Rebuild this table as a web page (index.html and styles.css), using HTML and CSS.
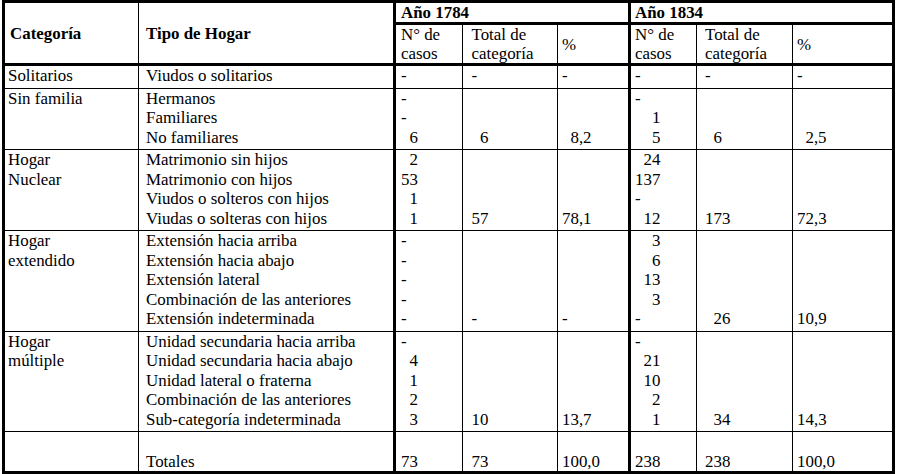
FILE: index.html
```html
<!DOCTYPE html>
<html lang="es">
<head>
<meta charset="utf-8">
<title>Tipos de hogar 1784 y 1834</title>
<link rel="stylesheet" href="styles.css">
</head>
<body>
<table class="hogares">
  <colgroup>
    <col class="c-cat"><col class="c-tipo">
    <col class="c-n"><col class="c-tot1"><col class="c-pct1">
    <col class="c-n2"><col class="c-tot2"><col class="c-pct2">
  </colgroup>
  <thead>
    <tr class="h1">
      <th rowspan="2" class="h-cat">Categoría</th>
      <th rowspan="2" class="h-tipo">Tipo de Hogar</th>
      <th colspan="3" class="h-year n1">Año 1784</th>
      <th colspan="3" class="h-year n2">Año 1834</th>
    </tr>
    <tr class="h2">
      <th class="n1">N° de<br>casos</th>
      <th class="t1">Total de<br>categoría</th>
      <th class="p1 mid">%</th>
      <th class="n2">N° de<br>casos</th>
      <th class="t2">Total de<br>categoría</th>
      <th class="p2 mid">%</th>
    </tr>
  </thead>
  <tbody>
    <tr class="first">
      <td class="cat">Solitarios</td>
      <td class="tipo">Viudos o solitarios</td>
      <td class="n1">-</td>
      <td class="t1">-</td>
      <td class="p1">-</td>
      <td class="n2">-</td>
      <td class="t2">-</td>
      <td class="p2">-</td>
    </tr>
    <tr>
      <td class="cat">Sin familia</td>
      <td class="tipo">Hermanos<br>Familiares<br>No familiares</td>
      <td class="n1">-<br>-<br><span class="f2">6</span></td>
      <td class="t1"><span class="f2">6</span></td>
      <td class="p1"><span class="f4">8,2</span></td>
      <td class="n2">-<br><span class="f3">1</span><br><span class="f3">5</span></td>
      <td class="t2"><span class="f2">6</span></td>
      <td class="p2"><span class="f4">2,5</span></td>
    </tr>
    <tr>
      <td class="cat">Hogar<br>Nuclear</td>
      <td class="tipo">Matrimonio sin hijos<br>Matrimonio con hijos<br>Viudos o solteros con hijos<br>Viudas o solteras con hijos</td>
      <td class="n1"><span class="f2">2</span><br><span class="f2">53</span><br><span class="f2">1</span><br><span class="f2">1</span></td>
      <td class="t1"><span class="f2">57</span></td>
      <td class="p1"><span class="f4">78,1</span></td>
      <td class="n2"><span class="f3">24</span><br><span class="f3">137</span><br>-<br><span class="f3">12</span></td>
      <td class="t2"><span class="f3">173</span></td>
      <td class="p2"><span class="f4">72,3</span></td>
    </tr>
    <tr>
      <td class="cat">Hogar<br>extendido</td>
      <td class="tipo">Extensión hacia arriba<br>Extensión hacia abajo<br>Extensión lateral<br>Combinación de las anteriores<br>Extensión indeterminada</td>
      <td class="n1">-<br>-<br>-<br>-<br>-</td>
      <td class="t1">-</td>
      <td class="p1">-</td>
      <td class="n2"><span class="f3">3</span><br><span class="f3">6</span><br><span class="f3">13</span><br><span class="f3">3</span><br>-</td>
      <td class="t2"><span class="f3">26</span></td>
      <td class="p2"><span class="f4">10,9</span></td>
    </tr>
    <tr>
      <td class="cat">Hogar<br>múltiple</td>
      <td class="tipo">Unidad secundaria hacia arriba<br>Unidad secundaria hacia abajo<br>Unidad lateral o fraterna<br>Combinación de las anteriores<br>Sub-categoría indeterminada</td>
      <td class="n1">-<br><span class="f2">4</span><br><span class="f2">1</span><br><span class="f2">2</span><br><span class="f2">3</span></td>
      <td class="t1"><span class="f2">10</span></td>
      <td class="p1"><span class="f4">13,7</span></td>
      <td class="n2">-<br><span class="f3">21</span><br><span class="f3">10</span><br><span class="f3">2</span><br><span class="f3">1</span></td>
      <td class="t2"><span class="f3">34</span></td>
      <td class="p2"><span class="f4">14,3</span></td>
    </tr>
    <tr class="totals">
      <td class="cat"></td>
      <td class="tipo">Totales</td>
      <td class="n1">73</td>
      <td class="t1"><span class="f2">73</span></td>
      <td class="p1">100,0</td>
      <td class="n2">238</td>
      <td class="t2">238</td>
      <td class="p2">100,0</td>
    </tr>
  </tbody>
</table>
</body>
</html>
```

FILE: styles.css
```css
html, body {
  margin: 0;
  padding: 0;
  background: #ffffff;
}

body {
  font-family: "Liberation Serif", "Times New Roman", serif;
  font-size: 16.9px;
  color: #000000;
}

.hogares {
  border-collapse: separate;
  border-spacing: 0;
  table-layout: fixed;
  box-sizing: border-box;
  width: 893px;
  margin-left: 2px;
  border: 3px solid #000000;
}

.c-cat { width: 133px; }
.c-tipo { width: 255px; }
.c-n { width: 69px; }
.c-tot1 { width: 95px; }
.c-pct1 { width: 71px; }
.c-n2 { width: 68px; }
.c-tot2 { width: 96px; }
.c-pct2 { width: 100px; }

.hogares th,
.hogares td {
  box-sizing: border-box;
  padding: 0 0 2px 0;
  border-left: 1px solid #000000;
  border-top: 1px solid #000000;
  text-align: left;
  vertical-align: top;
  line-height: 19.5px;
  font-weight: normal;
  white-space: nowrap;
}

/* header */
.hogares thead th {
  line-height: 19px;
  padding-bottom: 0;
}

.h1 th {
  border-top: 0;
}

.h2 th {
  border-top: 3px solid #000000;
}

.h-cat {
  font-weight: bold !important;
  vertical-align: middle !important;
  border-left: 0 !important;
  padding-left: 5px !important;
}

.h-tipo {
  font-weight: bold !important;
  vertical-align: middle !important;
  padding-left: 7px !important;
}

.h-year {
  font-weight: bold !important;
  height: 19px;
}

.mid {
  vertical-align: middle !important;
}

/* columns */
.cat { border-left: 0 !important; padding-left: 3px !important; }
.tipo { padding-left: 7px !important; }
.n1 { border-left: 3px solid #000000 !important; padding-left: 5px !important; }
.t1 { padding-left: 8.5px !important; }
.p1 { padding-left: 4px !important; }
.n2 { border-left: 3px solid #000000 !important; padding-left: 4px !important; }
.t2 { padding-left: 8px !important; }
.p2 { padding-left: 4px !important; }

tbody .t1, tbody .p1, tbody .t2, tbody .p2 {
  vertical-align: bottom;
}

.first td {
  border-top: 3px solid #000000;
}

.totals td {
  height: 40px;
  line-height: 19px;
  padding-bottom: 0;
  vertical-align: bottom;
}

/* right-aligned number fields */
.f2, .f3, .f4 {
  display: inline-block;
  text-align: right;
}
.f2 { width: 1em; }
.f3 { width: 1.5em; }
.f4 { width: 1.75em; }
```
